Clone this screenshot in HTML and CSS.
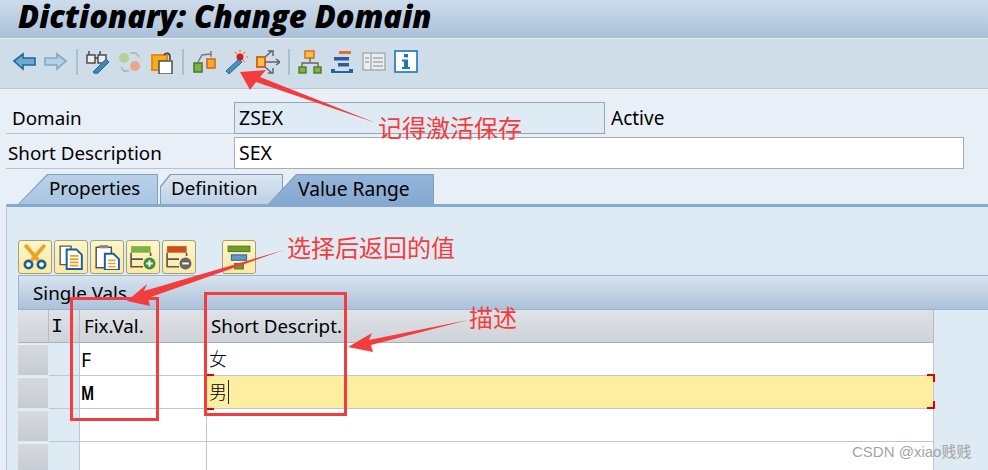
FILE: index.html
```html
<!DOCTYPE html>
<html lang="en">
<head>
<meta charset="UTF-8">
<title>Dictionary: Change Domain</title>
<link rel="stylesheet" href="styles.css">
</head>
<body>

<div class="page">

    <div class="title-bar">
        <h1>Dictionary: Change Domain</h1>
    </div>

    <!-- main toolbar -->
    <div class="toolbar">
        <svg class="icon" viewBox="0 0 24 24"><path d="M2 11 11 4V8H23V15H11V19Z" fill="#6ea8d3" stroke="#1b6a9f" stroke-width="1.6"/></svg>
        <svg class="icon" viewBox="0 0 24 24"><path d="M22 11 13 4V8H1V15H13V19Z" fill="#b5cfe3" stroke="#7ea9c7" stroke-width="1.6"/></svg>
        <span class="sep"></span>
        <svg class="icon" viewBox="0 0 24 24"><rect x="1" y="5" width="8" height="8" fill="#eee" stroke="#444" stroke-width="1.4"/><rect x="12" y="5" width="8" height="8" fill="#eee" stroke="#444" stroke-width="1.4"/><path d="M3 5V1M14 5V1M9 8h3" stroke="#444" stroke-width="1.4"/><path d="M7 22 20 9l3 3L10 25Z" fill="#3f86b5" stroke="#1b6a9f"/></svg>
        <svg class="icon" viewBox="0 0 24 24"><circle cx="6" cy="8" r="5" fill="#b4d39a"/><circle cx="17" cy="16" r="5" fill="#e8a78c"/><path d="M12 3h6l3 4M11 21H6l-3-4" fill="none" stroke="#bbb" stroke-width="2"/></svg>
        <svg class="icon" viewBox="0 0 24 24"><rect x="2" y="5" width="15" height="15" fill="#f5ad1c" stroke="#e68a10" stroke-width="2"/><rect x="9" y="11" width="13" height="13" fill="#fff" stroke="#444" stroke-width="1.4"/><path d="M14 5c2-3 6-2 6 2v3" fill="none" stroke="#444" stroke-width="1.6"/></svg>
        <span class="sep"></span>
        <svg class="icon" viewBox="0 0 24 24"><rect x="2" y="13" width="8" height="9" fill="#7cb342" stroke="#4a7d2c" stroke-width="1.6"/><rect x="15" y="9" width="8" height="9" fill="#f5ad1c" stroke="#d9622b" stroke-width="1.6"/><path d="M6 12 10 5l9-1" fill="none" stroke="#777" stroke-width="1.4"/><path d="M19 1v6" stroke="#777" stroke-width="1.4"/></svg>
        <svg class="icon" viewBox="0 0 24 24"><path d="M2 21 15 9l3 3L5 24Z" fill="#4d8fbd" stroke="#1b6a9f"/><circle cx="16" cy="7" r="3.5" fill="#d01c2a"/><path d="M16 0v2M22 7h2M11 2l2 2M21 2l-2 2M21 12l-2-2" stroke="#f0a020" stroke-width="1.6"/></svg>
        <svg class="icon" viewBox="0 0 24 24"><rect x="1" y="7" width="8" height="10" fill="#f5c33b" stroke="#d9622b" stroke-width="2"/><path d="M9 12H24M20 9l4 3-4 3M9 7l7-6M12 1h5v5M9 17l7 6M12 23h5v-5" fill="none" stroke="#666" stroke-width="1.5"/></svg>
        <span class="sep"></span>
        <svg class="icon" viewBox="0 0 24 24"><rect x="7" y="1" width="9" height="7" fill="#f5c33b" stroke="#e0702a" stroke-width="1.6"/><path d="M12 8v4M4 17v-4H20v4" fill="none" stroke="#666" stroke-width="1.4"/><rect x="1" y="17" width="7" height="6" fill="#7cb342" stroke="#4a7d2c" stroke-width="1.4"/><rect x="16" y="17" width="7" height="6" fill="#7cb342" stroke="#4a7d2c" stroke-width="1.4"/></svg>
        <svg class="icon" viewBox="0 0 24 24"><rect x="9" y="1" width="12" height="3" fill="#e0702a"/><rect x="4" y="7" width="15" height="3.5" fill="#2d5a9e"/><rect x="8" y="13" width="11" height="3.5" fill="#2d5a9e"/><path d="M1 19h4v2h14v-2h4v4H1Z" fill="#1b6a9f"/></svg>
        <svg class="icon" viewBox="0 0 24 24"><rect x="1" y="3" width="22" height="17" fill="#e9eef3" stroke="#aaa" stroke-width="1.4"/><path d="M9 3V20" stroke="#aaa" stroke-width="1.4"/><path d="M3 8h4M3 12h4M11 8h10M11 12h10M11 16h10" stroke="#aaa" stroke-width="1.3"/></svg>
        <svg class="icon" viewBox="0 0 24 24"><rect x="1" y="1" width="22" height="21" fill="#fff" stroke="#1b76b5" stroke-width="1.6"/><rect x="10" y="4" width="4" height="3.4" fill="#1b76b5"/><path d="M8 9.5h6V17h2v2H8v-2h2v-5.5H8Z" fill="#1b76b5"/></svg>
    </div>

    <!-- header fields -->
    <div class="form">
        <div class="form-row">
            <label class="field-label indent">Domain</label>
            <div class="field readonly">ZSEX</div>
            <span class="status">Active</span>
        </div>
        <div class="form-row second">
            <label class="field-label">Short Description</label>
            <div class="field wide">SEX</div>
        </div>
    </div>

    <div class="tabs">
        <div class="tab tab-props"><span>Properties</span></div>
        <div class="tab tab-def"><span>Definition</span></div>
        <div class="tab tab-range"><span>Value Range</span></div>
    </div>

    <div class="panel">
        <!-- table toolbar -->
        <div class="table-tools">
            <button class="tool"><svg viewBox="0 0 24 24"><path d="M3 1 15 15M21 1 9 15" stroke="#f0a020" stroke-width="3.4"/><circle cx="6" cy="19" r="3.4" fill="#fff" stroke="#1b5f96" stroke-width="2.4"/><circle cx="18" cy="19" r="3.4" fill="#fff" stroke="#1b5f96" stroke-width="2.4"/></svg></button>
            <button class="tool"><svg viewBox="0 0 24 24"><path d="M2 2h10v17H2Z" fill="#fff" stroke="#555" stroke-width="1.3"/><path d="M8 5h9l5 5v13H8Z" fill="#fff" stroke="#1b5f96" stroke-width="1.8"/><path d="M11 11h8M11 14h8M11 17h8M11 20h8" stroke="#f0a020" stroke-width="1.6"/></svg></button>
            <button class="tool"><svg viewBox="0 0 24 24"><path d="M2 3h14v19H2Z" fill="#fff" stroke="#555" stroke-width="1.4"/><rect x="5" y="1" width="8" height="3" fill="#888"/><path d="M10 9h8l5 5v10H10Z" fill="#fff" stroke="#1b5f96" stroke-width="1.8"/><path d="M13 15h7M13 18h7M13 21h7" stroke="#f0a020" stroke-width="1.6"/></svg></button>
            <button class="tool"><svg viewBox="0 0 24 24"><rect x="1" y="2" width="18" height="6" fill="#7cb342"/><path d="M1 8V21H12M1 14H12M19 8v3" fill="none" stroke="#555" stroke-width="1.5"/><circle cx="18" cy="18" r="5.5" fill="#3f8f3a"/><path d="M15 18h6M18 15v6" stroke="#fff" stroke-width="1.8"/></svg></button>
            <button class="tool"><svg viewBox="0 0 24 24"><rect x="1" y="2" width="18" height="6" fill="#cf4a1e"/><path d="M1 8V21H12M1 14H12M19 8v3" fill="none" stroke="#555" stroke-width="1.5"/><circle cx="18" cy="18" r="5.5" fill="#666"/><path d="M15 18h6" stroke="#fff" stroke-width="1.8"/></svg></button>
            <button class="tool tool-gap"><svg viewBox="0 0 24 24"><rect x="2" y="2" width="20" height="5" fill="#6f9c2e" stroke="#557a22"/><rect x="5" y="10" width="14" height="5" fill="#5d9ac8" stroke="#2d6c9e"/><rect x="8" y="18" width="8" height="5" fill="#6f9c2e" stroke="#557a22"/></svg></button>
        </div>

        <div class="table-title">Single Vals.</div>

        <!-- value table -->
        <div class="value-table">
            <div class="th"></div>
            <div class="th mono">I</div>
            <div class="th">Fix.Val.</div>
            <div class="th">Short Descript.</div>

            <div class="sel"></div>
            <div class="mark"></div>
            <div class="td key">F</div>
            <div class="td zh">女</div>

            <div class="sel"></div>
            <div class="mark"></div>
            <div class="td key"><span class="narrow">M</span></div>
            <div class="td zh current"><span class="caret">男</span></div>

            <div class="sel"></div>
            <div class="mark"></div>
            <div class="td"></div>
            <div class="td"></div>

            <div class="sel"></div>
            <div class="mark"></div>
            <div class="td"></div>
            <div class="td"></div>
        </div>
    </div>

    <!-- annotations drawn on top of the screenshot -->
    <svg class="marks" viewBox="0 0 988 470">
        <polygon points="240,72 266,70 260,77 376,123 256,82 250,90"/>
        <polygon points="127,301 147,284 144,291 284,250 148,298 150,306"/>
        <polygon points="348,347 372,333 369,340 468,320 371,345 373,352"/>
        <rect class="box" x="71.5" y="298.5" width="86" height="121"/>
        <rect class="box" x="205.5" y="293.5" width="140" height="121"/>
        <path class="corner" d="M207 375h7M207 409h7M927 375h7v7M927 408h7v-7"/>
    </svg>
    <span class="note note-save">记得激活保存</span>
    <span class="note note-value">选择后返回的值</span>
    <span class="note note-desc">描述</span>
    <span class="watermark">CSDN @xiao贱贱</span>

</div>

</body>
</html>
```

FILE: styles.css
```css
:root{
    --page:#e8eff6;
    --panel:#deeaf4;
    --line:#bcc6d4;
    --red:#f53c3c;
}

*{
    box-sizing:border-box;
}

body{
    margin:0;
    background:var(--page);
    font-family:"Noto Sans", "Noto Sans CJK SC", sans-serif;
    color:#000;
}

.page{
    position:relative;
    width:988px;
    height:470px;
    overflow:hidden;
}

/* title */
.title-bar{
    height:38px;
    padding-left:18px;
    background:linear-gradient(#cddcea,#aac0d9);
}

.title-bar h1{
    margin:0;
    font-family:"Open Sans", sans-serif;
    font-size:31px;
    font-style:italic;
    font-weight:800;
    line-height:33px;
    white-space:nowrap;
}

/* toolbar */
.toolbar{
    display:flex;
    align-items:center;
    gap:8px;
    height:50px;
    margin-top:1px;
    padding:0 0 4px 12px;
    background:#cfdde9;
    border-bottom:1px solid #b8c6d6;
}

.icon{
    width:24px;
    height:24px;
    flex:none;
}

.sep{
    width:2px;
    height:26px;
    background:#a9c0d6;
}

/* fields */
.form{
    height:85px;
    padding-top:13px;
    margin-left:6px;
}

.form-row{
    display:flex;
    align-items:center;
    height:32px;
}

.form-row.second{
    margin-top:3px;
}

.field-label{
    width:228px;
    height:100%;
    padding-left:2px;
    font-size:18.8px;
    line-height:32px;
    border-bottom:1px solid #b9c2cd;
}

.field-label.indent{
    padding-left:6px;
}

.field{
    width:371px;
    height:100%;
    padding-left:4px;
    font-size:19.5px;
    line-height:30px;
    background:#fff;
    border:1px solid #a8adb3;
}

.field.readonly{
    background:#deeaf4;
    border-color:#9aa5b0;
}

.field.wide{
    width:730px;
}

.status{
    margin-left:6px;
    font-size:19px;
}

/* tabs */
.tabs{
    display:flex;
    height:30px;
    padding-left:18px;
}

.tab{
    position:relative;
    height:30px;
    font-size:18.8px;
    line-height:29px;
    background:#7f9fbf;
}

.tab span{
    position:relative;
}

.tab::before{
    content:"";
    position:absolute;
    inset:1px 1px 0 1px;
    clip-path:inherit;
}

.tab-props{
    width:140px;
    padding-left:31px;
    clip-path:polygon(0 100%,29px 0,100% 0,100% 100%);
}

.tab-props::before{
    background:linear-gradient(#b9d1e8,#a8c5e1);
}

.tab-def{
    width:123px;
    margin-left:2px;
    padding-left:11px;
    clip-path:polygon(0 100%,0 12px,10px 0,100% 0,100% 100%);
}

.tab-def::before{
    background:linear-gradient(#dbe6f1,#bcd1e5);
}

.tab-range{
    width:166px;
    margin-left:-15px;
    padding-left:30px;
    font-size:19.2px;
    clip-path:polygon(0 100%,28px 0,100% 0,100% 100%);
}

.tab-range::before{
    background:linear-gradient(#94b5da,#86a9d1);
}

/* panel */
.panel{
    margin-left:6px;
    height:267px;
    padding:33px 0 0 11px;
    background:var(--panel);
    border-top:3px solid #86a9cf;
    border-left:1px solid #b7c6d8;
}

.table-tools{
    display:flex;
    gap:2px;
    height:34px;
}

.tool{
    width:34px;
    height:34px;
    padding:3px;
    background:linear-gradient(#fdf6c8,#fbe9a4);
    border:1px solid #a5a078;
    border-radius:3px;
}

.tool svg{
    display:block;
    width:26px;
    height:26px;
}

.tool-gap{
    margin-left:24px;
}

.table-title{
    height:35px;
    margin-top:1px;
    padding-left:14px;
    font-size:18.8px;
    line-height:34px;
    background:linear-gradient(#d8e4ef,#abc2da);
    border:1px solid #9db4cc;
    border-right:none;
}

/* table */
.value-table{
    display:grid;
    grid-template-columns:31px 31px 127px 727px;
    grid-auto-rows:33px;
    width:916px;
}

.th{
    padding-left:4px;
    font-size:18.8px;
    line-height:33px;
    background:linear-gradient(#dfe2e6,#cfd3da);
    border-right:1px solid #b5bcc6;
    border-bottom:1px solid #a9b1bc;
}

.mono{
    font-family:"Liberation Mono", monospace;
    font-size:20px;
    padding-left:2px;
}

.sel{
    margin:1px 1px 1px 0;
    background:linear-gradient(#d6dadf,#c6cbd3);
    border-top:1px solid #eceef1;
}

.mark{
    border-right:1px solid var(--line);
    border-bottom:1px solid var(--line);
}

.td{
    background:#fff;
    border-right:1px solid var(--line);
    border-bottom:1px solid var(--line);
}

.key{
    padding-left:1px;
    font-size:19.5px;
    line-height:33px;
}

.narrow{
    display:inline-block;
    font-weight:700;
    transform:scaleX(.72);
    transform-origin:left;
}

.zh{
    padding-left:2px;
    font-size:18px;
    font-weight:300;
    line-height:33px;
}

.current{
    background:#feeea0;
}

.caret{
    padding-right:1px;
    border-right:1px solid #223;
}

/* annotations */
.marks{
    position:absolute;
    top:0;
    left:0;
    width:988px;
    height:470px;
    fill:var(--red);
}

.box{
    fill:none;
    stroke:var(--red);
    stroke-width:3;
}

.corner{
    fill:none;
    stroke:#e00000;
    stroke-width:2;
}

.note{
    position:absolute;
    color:var(--red);
    font-family:"Noto Sans CJK SC", sans-serif;
    font-size:24px;
    line-height:32px;
    white-space:nowrap;
}

.note-save{
    top:111px;
    left:378px;
}

.note-value{
    top:231px;
    left:287px;
}

.note-desc{
    top:301px;
    left:469px;
}

.watermark{
    position:absolute;
    top:443px;
    left:852px;
    color:#a4a4a4;
    font-family:"Liberation Sans", "Noto Sans CJK SC", sans-serif;
    font-size:15px;
    line-height:18px;
}
```
